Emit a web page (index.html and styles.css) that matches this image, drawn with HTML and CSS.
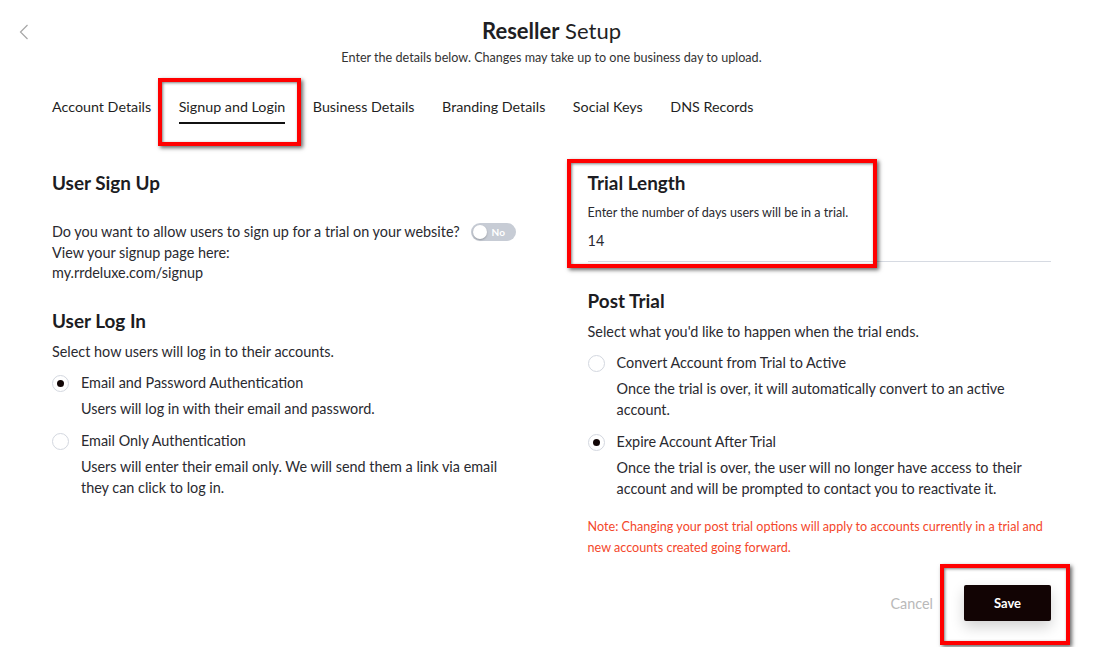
FILE: index.html
```html
<!DOCTYPE html>
<html lang="en">
<head>
    <meta charset="UTF-8">
    <meta name="viewport" content="width=device-width, initial-scale=1.0">
    <title>Reseller Setup</title>
    <link rel="stylesheet" href="styles.css">
</head>
<body>
    <div class="page">
        <header class="top">
            <a class="back" href="#">
                <svg width="10" height="16" viewBox="0 0 10 16"><polyline points="8.5,1 1.5,8 8.5,15" fill="none" stroke="#a7a7a7" stroke-width="1.2"/></svg>
            </a>
            <div class="titles">
                <h1><strong>Reseller</strong> Setup</h1>
                <p class="subtitle">Enter the details below. Changes may take up to one business day to upload.</p>
            </div>
        </header>

        <nav class="tabs">
            <a href="#">Account Details</a>
            <a href="#" class="active">Signup and Login</a>
            <a href="#">Business Details</a>
            <a href="#">Branding Details</a>
            <a href="#">Social Keys</a>
            <a href="#">DNS Records</a>
        </nav>

        <div class="columns">
            <section class="col">
                <h2>User Sign Up</h2>
                <div class="signup-text">
                    <div class="signup-row">
                        <span class="question">Do you want to allow users to sign up for a trial on your website?</span>
                        <span class="toggle"><span class="knob"></span><span class="toggle-label">No</span></span>
                    </div>
                    View your signup page here:<br>
                    my.rrdeluxe.com/signup
                </div>

                <h2 class="login-title">User Log In</h2>
                <p class="lead">Select how users will log in to their accounts.</p>

                <div class="option">
                    <span class="radio checked"></span>
                    <div>
                        <div class="option-label">Email and Password Authentication</div>
                        <div class="option-desc">Users will log in with their email and password.</div>
                    </div>
                </div>
                <div class="option">
                    <span class="radio"></span>
                    <div>
                        <div class="option-label">Email Only Authentication</div>
                        <div class="option-desc">Users will enter their email only. We will send them a link via email they can click to log in.</div>
                    </div>
                </div>
            </section>

            <section class="col">
                <h2>Trial Length</h2>
                <p class="hint">Enter the number of days users will be in a trial.</p>
                <div class="field">14</div>

                <h2 class="post-title">Post Trial</h2>
                <p class="lead">Select what you'd like to happen when the trial ends.</p>

                <div class="option">
                    <span class="radio"></span>
                    <div>
                        <div class="option-label">Convert Account from Trial to Active</div>
                        <div class="option-desc">Once the trial is over, it will automatically convert to an active account.</div>
                    </div>
                </div>
                <div class="option">
                    <span class="radio checked"></span>
                    <div>
                        <div class="option-label">Expire Account After Trial</div>
                        <div class="option-desc">Once the trial is over, the user will no longer have access to their account and will be prompted to contact you to reactivate it.</div>
                    </div>
                </div>

                <p class="note">Note: Changing your post trial options will apply to accounts currently in a trial and new accounts created going forward.</p>

                <div class="actions">
                    <button class="cancel">Cancel</button>
                    <button class="save">Save</button>
                </div>
            </section>
        </div>

        <!-- annotation boxes -->
        <div class="mark mark-tab"></div>
        <div class="mark mark-trial"></div>
        <div class="mark mark-save"></div>
    </div>
</body>
</html>
```

FILE: styles.css
```css
body {
    margin: 0;
    font-family: Lato, "Open Sans", sans-serif;
    color: #2a2a30;
    background: #fff;
}

.page {
    position: relative;
    height: 647px;
    overflow: hidden;
}

.top {
    display: grid;
    grid-template-columns: 1fr auto 1fr;
    padding: 16px 0 0 10px;
}

.back {
    padding: 8px 0 0 9px;
}

.titles {
    text-align: center;
}

h1 {
    margin: 0;
    font-size: 22px;
    line-height: 30px;
    font-weight: 400;
    color: #1f1f24;
}

h1 strong {
    font-weight: 700;
}

.subtitle {
    margin: 3px 0 0;
    font-size: 12.6px;
    line-height: 18px;
    color: #333;
}

.tabs {
    display: flex;
    gap: 27.5px;
    padding: 30px 0 0 52px;
}

.tabs a {
    font-size: 14.3px;
    line-height: 20px;
    color: #1f1f24;
    text-decoration: none;
    padding-bottom: 5px;
    border-bottom: 2px solid transparent;
}

.tabs a.active {
    border-bottom-color: #111;
}

.columns {
    display: grid;
    grid-template-columns: 1fr 1fr;
    gap: 72px;
    padding: 46px 42px 0 52px;
}

h2 {
    margin: 0;
    font-size: 18.9px;
    line-height: 26px;
    font-weight: 700;
    color: #1c1c22;
}

p {
    margin: 0;
}

.signup-text {
    margin-top: 26px;
    font-size: 14.4px;
    line-height: 20.5px;
}

.signup-row {
    display: flex;
    align-items: center;
    gap: 11px;
}

.question {
    white-space: nowrap;
}

.toggle {
    flex: none;
    display: flex;
    align-items: center;
    width: 45px;
    height: 18px;
    border-radius: 9px;
    background: #c7ccd5;
}

.knob {
    width: 14px;
    height: 14px;
    margin-left: 2px;
    border-radius: 50%;
    background: #fff;
    box-shadow: 0 1px 2px rgba(0, 0, 0, 0.25);
}

.toggle-label {
    margin-left: 5px;
    font-size: 10px;
    line-height: 12px;
    font-weight: 700;
    color: #fff;
}

.login-title {
    margin-top: 24px;
}

.lead {
    margin-top: 7px;
    font-size: 14.4px;
    line-height: 21px;
}

.option {
    display: flex;
    gap: 12px;
    margin-top: 10px;
}

.option + .option {
    margin-top: 11px;
}

.radio {
    flex: none;
    width: 15px;
    height: 15px;
    margin-top: 3px;
    border: 1px solid #d3d7df;
    border-radius: 50%;
    background: #fff;
    position: relative;
}

.radio.checked::after {
    content: "";
    position: absolute;
    left: 4px;
    top: 4px;
    width: 7px;
    height: 7px;
    border-radius: 50%;
    background: #120606;
}

.option-label {
    font-size: 14.4px;
    line-height: 21px;
}

.option-desc {
    margin-top: 5px;
    font-size: 14.4px;
    line-height: 21px;
}

.hint {
    margin-top: 8px;
    font-size: 12.6px;
    line-height: 18px;
}

.field {
    margin-top: 8px;
    padding-bottom: 10px;
    font-size: 14.4px;
    line-height: 21px;
    border-bottom: 1px solid #d6dae2;
}

.post-title {
    margin-top: 26px;
}

.note {
    margin-top: 17px;
    font-size: 12.6px;
    line-height: 21px;
    color: #f4472b;
}

.actions {
    display: flex;
    justify-content: flex-end;
    align-items: center;
    gap: 31px;
    margin-top: 27px;
}

.cancel {
    border: none;
    background: none;
    padding: 0;
    font-family: inherit;
    font-size: 14.4px;
    color: #b9b9b9;
}

.save {
    width: 87px;
    height: 36px;
    border: none;
    border-radius: 2px;
    background: #120404;
    color: #fff;
    font-family: inherit;
    font-size: 13px;
    font-weight: 700;
    box-shadow: 0 6px 14px rgba(0, 0, 0, 0.18);
}

.mark {
    position: absolute;
    border: 4px solid #f00;
    box-shadow: 2px 2px 4px rgba(0, 0, 0, 0.6), inset 1px 1px 3px rgba(0, 0, 0, 0.5);
}

.mark-tab {
    left: 158px;
    top: 78px;
    width: 135px;
    height: 60px;
}

.mark-trial {
    left: 567px;
    top: 159px;
    width: 302px;
    height: 101px;
}

.mark-save {
    left: 940px;
    top: 564px;
    width: 122px;
    height: 73px;
}
```
